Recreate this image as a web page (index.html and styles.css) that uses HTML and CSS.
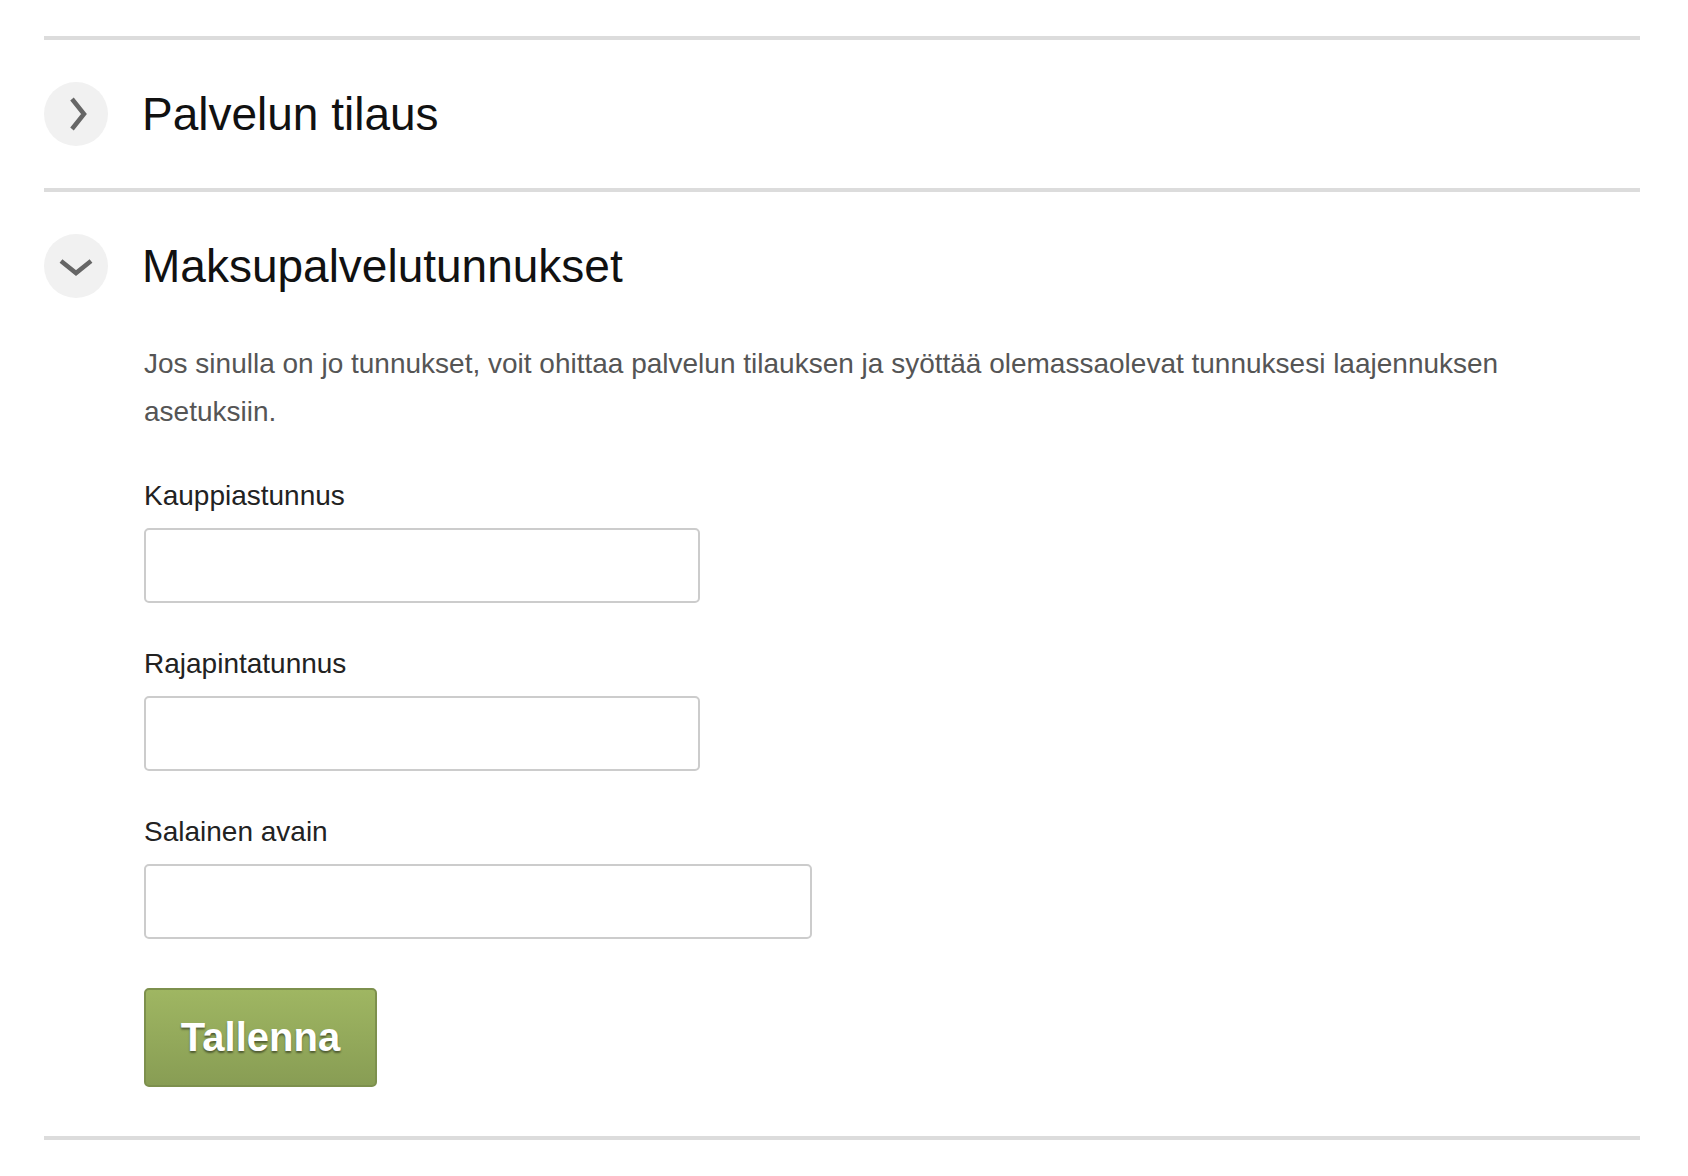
FILE: index.html
```html
<!DOCTYPE html>
<html lang="fi">
<head>
<meta charset="utf-8">
<title>Maksupalvelutunnukset</title>
<link rel="stylesheet" href="styles.css">
</head>
<body>
<div class="page">
  <section class="section">
    <div class="section-header">
      <span class="toggle">
        <svg width="64" height="64" viewBox="0 0 64 64"><polyline points="28,17 40,32 28,47" fill="none" stroke="#666" stroke-width="4.5" stroke-linejoin="miter"/></svg>
      </span>
      <h2 class="section-title">Palvelun tilaus</h2>
    </div>
  </section>
  <section class="section section-open">
    <div class="section-header">
      <span class="toggle">
        <svg width="64" height="64" viewBox="0 0 64 64"><polyline points="17,27 32,39 47,27" fill="none" stroke="#666" stroke-width="4.5" stroke-linejoin="miter"/></svg>
      </span>
      <h2 class="section-title">Maksupalvelutunnukset</h2>
    </div>
    <div class="section-body">
      <p class="intro">Jos sinulla on jo tunnukset, voit ohittaa palvelun tilauksen ja syöttää olemassaolevat tunnuksesi laajennuksen asetuksiin.</p>
      <div class="field">
        <label class="field-label" for="f1">Kauppiastunnus</label>
        <input class="field-input" id="f1" type="text">
      </div>
      <div class="field">
        <label class="field-label" for="f2">Rajapintatunnus</label>
        <input class="field-input" id="f2" type="text">
      </div>
      <div class="field field-last">
        <label class="field-label" for="f3">Salainen avain</label>
        <input class="field-input field-input-wide" id="f3" type="text">
      </div>
      <button class="save-button" type="button">Tallenna</button>
    </div>
  </section>
</div>
</body>
</html>
```
FILE: styles.css
```css
html, body {
  margin: 0;
  padding: 0;
  background: #fff;
}
body {
  font-family: "Liberation Sans", Arial, Helvetica, sans-serif;
  color: #222;
}
.page {
  padding: 36px 0 0 44px;
  width: 1596px;
}
.section {
  border-top: 4px solid #dcdcdc;
}
.section-open {
  border-bottom: 4px solid #dcdcdc;
}
.section-header {
  display: flex;
  align-items: center;
  gap: 34px;
  padding: 42px 0;
}
.section-open .section-header {
  padding-bottom: 0;
}
.toggle {
  width: 64px;
  height: 64px;
  border-radius: 50%;
  background: #f1f1f1;
  flex: none;
  display: block;
}
.toggle svg {
  display: block;
}
.section-title {
  margin: 0;
  font-size: 46px;
  line-height: 64px;
  font-weight: normal;
  color: #111;
}
.section-body {
  padding: 42px 0 49px 100px;
}
.intro {
  margin: 0 0 40px;
  max-width: 1400px;
  font-size: 28px;
  line-height: 48px;
  color: #555;
}
.field {
  margin-bottom: 41px;
}
.field-last {
  margin-bottom: 49px;
}
.field-label {
  display: block;
  font-size: 28px;
  line-height: 40px;
  margin-bottom: 12px;
  color: #222;
}
.field-input {
  display: block;
  box-sizing: border-box;
  width: 556px;
  height: 75px;
  margin: 0;
  border: 2px solid #cccccc;
  border-radius: 5px;
  background: #fff;
  font-family: inherit;
  font-size: 28px;
  padding: 0 14px;
}
.field-input-wide {
  width: 668px;
}
.save-button {
  display: block;
  box-sizing: border-box;
  width: 233px;
  height: 99px;
  margin: 0;
  padding: 0;
  border: 2px solid #7d904d;
  border-radius: 5px;
  background: linear-gradient(#9fb662, #889d54);
  color: #fff;
  font-family: inherit;
  font-size: 40px;
  font-weight: bold;
  text-shadow: 0 2px 2px rgba(0, 0, 0, 0.45);
  cursor: pointer;
}
```
